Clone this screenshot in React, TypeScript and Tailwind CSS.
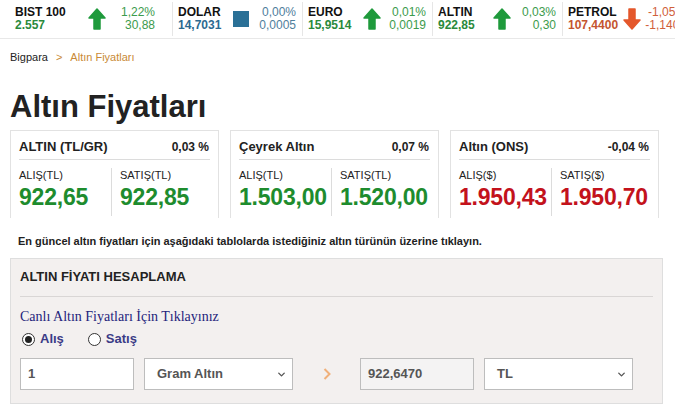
import { ChevronDown } from 'lucide-react';

interface Ticker {
    name: string;
    value: string;
    pct: string;
    diff: string;
    dir: 'up' | 'down' | 'flat';
}

interface GoldCard {
    title: string;
    pct: string;
    buyLabel: string;
    sellLabel: string;
    buy: string;
    sell: string;
    down?: boolean;
}

const tickers: Ticker[] = [
    { name: 'BIST 100', value: '2.557', pct: '1,22%', diff: '30,88', dir: 'up' },
    { name: 'DOLAR', value: '14,7031', pct: '0,00%', diff: '0,0005', dir: 'flat' },
    { name: 'EURO', value: '15,9514', pct: '0,01%', diff: '0,0019', dir: 'up' },
    { name: 'ALTIN', value: '922,85', pct: '0,03%', diff: '0,30', dir: 'up' },
    { name: 'PETROL', value: '107,4400', pct: '-1,05%', diff: '-1,1400', dir: 'down' },
];

const cards: GoldCard[] = [
    { title: 'ALTIN (TL/GR)', pct: '0,03 %', buyLabel: 'ALIŞ(TL)', sellLabel: 'SATIŞ(TL)', buy: '922,65', sell: '922,85' },
    { title: 'Çeyrek Altın', pct: '0,07 %', buyLabel: 'ALIŞ(TL)', sellLabel: 'SATIŞ(TL)', buy: '1.503,00', sell: '1.520,00' },
    { title: 'Altın (ONS)', pct: '-0,04 %', buyLabel: 'ALIŞ($)', sellLabel: 'SATIŞ($)', buy: '1.950,43', sell: '1.950,70', down: true },
];

function Arrow({ dir }: { dir: 'up' | 'down' }) {
    const up = dir === 'up';
    const color = up ? '#1f9a3c' : '#e4572b';
    return (
        <svg width="18" height="22" viewBox="0 0 18 22" className="shrink-0">
            <path
                d={up ? 'M9 1 L17 10 L12 10 L12 21 L6 21 L6 10 L1 10 Z' : 'M9 21 L17 12 L12 12 L12 1 L6 1 L6 12 L1 12 Z'}
                fill={color}
                stroke={color}
                strokeLinejoin="round"
                strokeWidth="1.5"
            />
        </svg>
    );
}

function TickerItem({ t, first }: { t: Ticker; first: boolean }) {
    const valueColor = t.dir === 'down' ? 'text-[#c4552f]' : t.dir === 'flat' ? 'text-[#2c6a90]' : 'text-[#2a8a3c]';
    const numColor = t.dir === 'down' ? 'text-[#d0603a]' : t.dir === 'flat' ? 'text-[#4f7e9c]' : 'text-[#3c9b4c]';
    return (
        <div
            className={`flex items-center shrink-0 h-[34px] border-r border-[#e6e6e6] ${
                first ? 'w-[158px] pr-[17px]' : 'w-[130px] pl-[5px] pr-[6px]'
            }`}
        >
            <div className={`flex flex-col shrink-0 leading-[13px] ${first ? 'w-[73px]' : 'w-[55px]'}`}>
                <span className="text-[12px] font-bold text-[#111]">{t.name}</span>
                <span className={`text-[12px] font-bold whitespace-nowrap ${valueColor}`}>{t.value}</span>
            </div>
            {t.dir === 'flat' ? (
                <div className="w-[16px] h-[16px] shrink-0 bg-[#2a7096] mr-[2px]" />
            ) : (
                <Arrow dir={t.dir} />
            )}
            <div className={`flex-1 flex flex-col items-end leading-[13px] text-[12px] whitespace-nowrap ${numColor}`}>
                <span>{t.pct}</span>
                <span>{t.diff}</span>
            </div>
        </div>
    );
}

function Card({ c }: { c: GoldCard }) {
    const val = c.down ? 'text-[#c3121c]' : 'text-[#1e8c2e]';
    return (
        <div className="w-[209px] h-[88px] border border-b-0 border-[#e2e2e2] bg-white px-[8px] pt-[7px]">
            <div className="flex justify-between items-center h-[22px] border-b border-[#dcdcdc] pb-[2px]">
                <span className="text-[13px] font-bold text-[#222]">{c.title}</span>
                <span className="text-[12px] font-bold text-[#222] pr-[1px]">{c.pct}</span>
            </div>
            <div className="flex mt-[8px]">
                <div className="w-[93px] border-r border-[#dcdcdc] h-[48px]">
                    <div className="text-[11px] text-[#222] leading-[15px]">{c.buyLabel}</div>
                    <div className={`text-[23px] font-bold leading-[29px] tracking-[-0.2px] ${val}`}>{c.buy}</div>
                </div>
                <div className="pl-[8px]">
                    <div className="text-[11px] text-[#222] leading-[15px]">{c.sellLabel}</div>
                    <div className={`text-[23px] font-bold leading-[29px] tracking-[-0.2px] ${val}`}>{c.sell}</div>
                </div>
            </div>
        </div>
    );
}

function Radio({ checked, label }: { checked: boolean; label: string }) {
    return (
        <label className="flex items-center gap-[5px] h-[16px]">
            <span className="w-[13px] h-[13px] rounded-full border border-[#333] bg-white flex items-center justify-center">
                {checked && <span className="w-[7px] h-[7px] rounded-full bg-[#222]" />}
            </span>
            <span className="text-[13px] font-bold text-[#3b3b86]">{label}</span>
        </label>
    );
}

function Field({ value, select, readOnly, width }: { value: string; select?: boolean; readOnly?: boolean; width: string }) {
    return (
        <div
            className={`${width} h-[32px] border border-[#bdbdbd] flex items-center justify-between text-[13px] font-bold text-[#555] ${
                select ? 'pl-[12px] pr-[5px]' : 'px-[7px]'
            } ${readOnly ? 'bg-[#f4f3f3]' : 'bg-white'}`}
        >
            <span>{value}</span>
            {select && <ChevronDown size={11} strokeWidth={3} className="text-[#555]" />}
        </div>
    );
}

export default function App() {
    return (
        <div className="w-[675px] h-[417px] overflow-hidden bg-white font-['Liberation_Sans',Arial,sans-serif]">
            {/* Market ticker */}
            <div className="flex items-center h-[39px] pl-[15px] border-b border-[#e8e8e8]">
                {tickers.map((t, i) => (
                    <TickerItem key={t.name} t={t} first={i === 0} />
                ))}
            </div>

            <div className="px-[10px]">
                {/* Breadcrumb */}
                <div className="mt-[10px] text-[11px] flex gap-[8px] text-[#c98a36]">
                    <span className="text-[#222]">Bigpara</span>
                    <span>&gt;</span>
                    <span>Altın Fiyatları</span>
                </div>

                <h1 className="mt-[24px] text-[31px] font-bold text-[#222] leading-[34px]">Altın Fiyatları</h1>

                {/* Gold price cards */}
                <div className="flex gap-[11px] mt-[6px]">
                    {cards.map((c) => (
                        <Card key={c.title} c={c} />
                    ))}
                </div>

                <p className="mt-[15px] pl-[8px] text-[11px] font-bold text-[#222]">
                    En güncel altın fiyatları için aşağıdaki tablolarda istediğiniz altın türünün üzerine tıklayın.
                </p>

                {/* Calculator */}
                <div className="mt-[9px] w-[653px] h-[146px] bg-[#f3f0ef] border border-[#dedede] px-[9px] pt-[8px]">
                    <div className="h-[30px] border-b border-[#d9d6d5] text-[13px] leading-[20px] font-bold text-[#222]">
                        ALTIN FİYATI HESAPLAMA
                    </div>
                    <div className="mt-[12px] font-['Liberation_Serif','Times_New_Roman',serif] text-[14px] text-[#24247c] leading-[16px]">
                        Canlı Altın Fiyatları İçin Tıklayınız
                    </div>
                    <div className="flex gap-[24px] mt-[6px] pl-[2px]">
                        <Radio checked label="Alış" />
                        <Radio checked={false} label="Satış" />
                    </div>
                    <div className="flex items-center mt-[11px]">
                        <Field value="1" width="w-[114px]" />
                        <div className="ml-[10px]">
                            <Field value="Gram Altın" select width="w-[149px]" />
                        </div>
                        <div className="w-[67px] flex justify-center">
                            <svg width="8" height="12" viewBox="0 0 8 12">
                                <path d="M1.5 1 L6.5 6 L1.5 11" fill="none" stroke="#f0b07a" strokeWidth="2" />
                            </svg>
                        </div>
                        <Field value="922,6470" readOnly width="w-[114px]" />
                        <div className="ml-[10px]">
                            <Field value="TL" select width="w-[149px]" />
                        </div>
                    </div>
                </div>
            </div>
        </div>
    );
}
